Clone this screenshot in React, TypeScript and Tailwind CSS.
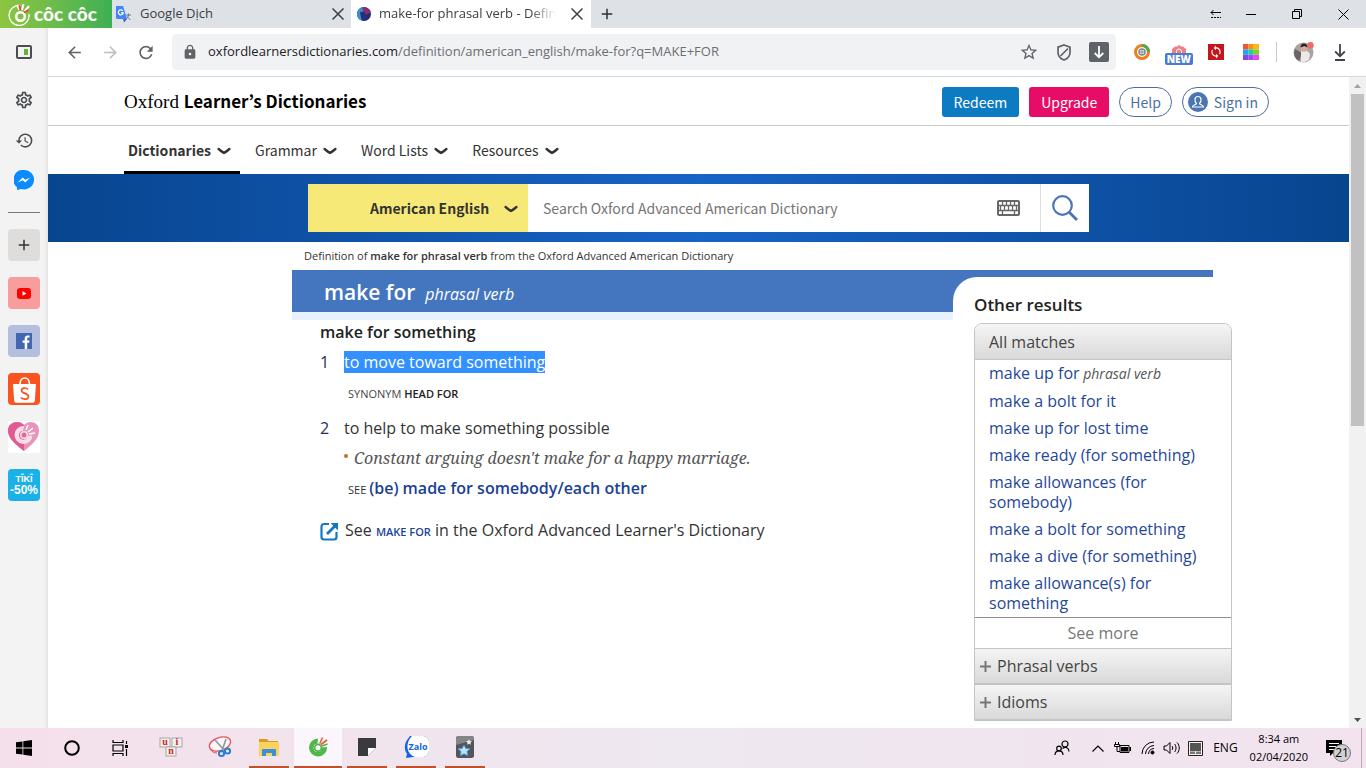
import React from 'react';
import {
  MdAdd,
  MdArrowBack,
  MdArrowForward,
  MdHistory,
  MdLock,
  MdOutlineSettings,
  MdRefresh,
  MdStarBorder,
  MdSync,
} from 'react-icons/md';

const navItems = [
  { label: 'Dictionaries', active: true },
  { label: 'Grammar', active: false },
  { label: 'Word Lists', active: false },
  { label: 'Resources', active: false },
];

const matches = [
  { label: 'make up for', pos: 'phrasal verb' },
  { label: 'make a bolt for it' },
  { label: 'make up for lost time' },
  { label: 'make ready (for something)' },
  { label: 'make allowances (for somebody)' },
  { label: 'make a bolt for something' },
  { label: 'make a dive (for something)' },
  { label: 'make allowance(s) for something' },
];

function Chevron() {
  return (
    <svg width="14" height="9" viewBox="0 0 14 9" fill="none" stroke="currentColor" strokeWidth="2.4" strokeLinecap="round" aria-hidden="true">
      <path d="M1.6 3c1.6 1.200 3.200 2.800 5.400 4C9.200 5.800 10.800 4.200 12.400 3" />
    </svg>
  );
}

function CloseIcon() {
  return (
    <svg width="12" height="12" viewBox="0 0 12 12" stroke="#3c4043" strokeWidth="1.5" aria-hidden="true">
      <path d="M0.500 0.500l11 11M11.500 0.500l-11 11" />
    </svg>
  );
}

function CocCocMark() {
  return (
    <svg width="20" height="20" viewBox="0 0 20 20" fill="none" aria-hidden="true">
      <path d="M10 1.500a9 9 0 1 0 9 8.500l-5 .5a4.200 4.200 0 1 1-4.500-4z" fill="#4eb748" />
      <circle cx="10" cy="10.800" r="3.400" stroke="#4eb748" strokeWidth="1.800" fill="#fff" />
      <path d="M13 7.500l6-4.500" stroke="#e8593b" strokeWidth="1.800" />
      <path d="M11.800 6.500L14.500 0.500" stroke="#e8593b" strokeWidth="1.500" />
      <path d="M14 9l5.500-2" stroke="#4eb748" strokeWidth="1.500" />
    </svg>
  );
}

function TabStrip() {
  return (
    <header className="flex h-7 shrink-0 bg-[#dee1e6] text-[#3c4043]">
      <div className="flex w-28 items-center bg-linear-to-r from-[#8dc63f] to-[#3cb054] pl-2 text-white">
        <svg width="22" height="24" viewBox="0 0 22 24" fill="none" aria-hidden="true">
          <path d="M13 3.600A10 10 0 1 0 21 12" stroke="#fff" strokeWidth="1.400" />
          <circle cx="12.500" cy="14.500" r="4.300" stroke="#fff" strokeWidth="2.600" />
          <path d="M11.500 8l-2.500-5M14 8l1.500-6M16.500 9.500L21 4" stroke="#fff" strokeWidth="2" />
          <path d="M12.300 8l-1-5M16 10.500l4.500-2.500" stroke="#e8452f" strokeWidth="1.800" />
        </svg>
        <span className="ml-1 font-['Lato'] text-[19px] leading-7 font-black">côc côc</span>
      </div>
      <div className="flex w-[239px] items-center pr-[7px] pl-1">
        <svg width="16" height="17" viewBox="0 0 16 17" aria-hidden="true">
          <path d="M7 4h8v11H9z" fill="#dfe3ea" />
          <path d="M10 9h5M12.500 7.500V9c0 2-1.500 3.500-3 4.500M11 10.500c1 1.500 2 2.500 3.500 3" stroke="#6b7684" fill="none" />
          <path d="M0 0h7l4 13H1.500A1.500 1.500 0 0 1 0 11.500z" fill="#4285f4" />
          <path d="M7 13h4l-3 3.500z" fill="#3367d6" />
          <path d="M6.800 4.800a2.500 2.500 0 1 0 .5 2H5" stroke="#fff" strokeWidth="1.200" fill="none" />
        </svg>
        <span className="ml-2 grow text-[13px]">Google Dịch</span>
        <button type="button" aria-label="Close Google Dịch tab"><CloseIcon /></button>
      </div>
      <div className="flex w-60 items-center bg-white pr-2 pl-1.5">
        <svg width="14" height="14" viewBox="0 0 14 14" aria-hidden="true">
          <circle cx="7" cy="7" r="7" fill="#1d2f6f" />
          <path d="M0 7a7 7 0 0 1 6-6.900L9 3 3 6l2 7.700A7 7 0 0 1 0 7z" fill="#3e8fd0" />
          <path d="M5 1.500C9-1 13 2 13.800 5L9 8z" fill="#8c2b6e" />
          <path d="M3 4l8 7-4 2.500z" fill="#2a2f86" />
        </svg>
        <span className="ml-2 mask-r-from-85% text-[13px] whitespace-nowrap">make-for phrasal verb - Defin</span>
        <button type="button" className="ml-auto" aria-label="Close make-for tab"><CloseIcon /></button>
      </div>
      <button type="button" className="flex w-8 items-center justify-center text-[#2d3033]" aria-label="New tab">
        <MdAdd size={18} />
      </button>
      <div className="ml-auto flex items-center gap-6 pr-[17px] text-black">
        <button type="button" aria-label="Tab list">
          <svg width="12" height="8" viewBox="0 0 12 8" fill="none" stroke="currentColor" aria-hidden="true">
            <path d="M1 2.500h10M3.500 0L1 2.500 3.500 5" />
            <path d="M1 7.500h10" strokeDasharray="2 1" />
          </svg>
        </button>
        <button type="button" aria-label="Minimize" className="mr-3">
          <svg width="10" height="10" viewBox="0 0 10 10" stroke="currentColor" aria-hidden="true"><path d="M0 5.500h10" /></svg>
        </button>
        <button type="button" aria-label="Restore" className="mr-3">
          <svg width="10" height="10" viewBox="0 0 10 10" fill="none" stroke="currentColor" aria-hidden="true">
            <path d="M0.500 2.500h7v7h-7zM2.500 2.500v-2h7v7h-2" />
          </svg>
        </button>
        <button type="button" aria-label="Close window">
          <svg width="11" height="11" viewBox="0 0 11 11" stroke="currentColor" aria-hidden="true"><path d="M0.500 0.500l10 10M10.500 0.500l-10 10" /></svg>
        </button>
      </div>
    </header>
  );
}

function Sidebar() {
  return (
    <aside className="flex w-12 shrink-0 flex-col items-center bg-[#f3f3f3] text-[#4a4c50] shadow-[inset_-4px_0_4px_-3px_#dcdcdc]">
      <button type="button" aria-label="Side panel" className="mb-1 flex h-12 items-center">
        <svg width="16" height="14" viewBox="0 0 16 14" fill="none" aria-hidden="true">
          <rect x="1" y="1" width="14" height="12" rx="1" stroke="#4a4c50" strokeWidth="2" />
          <rect x="8" y="4" width="4" height="6" fill="#5fb336" />
        </svg>
      </button>
      <button type="button" aria-label="Settings" className="flex h-10 items-center"><MdOutlineSettings size={20} /></button>
      <button type="button" aria-label="History" className="flex h-10 items-center"><MdHistory size={19} /></button>
      <button type="button" aria-label="Messenger" className="flex h-10 items-center">
        <svg width="20" height="20" viewBox="0 0 20 20" aria-hidden="true">
          <path d="M10 0a10 9.700 0 1 1-2.800 19L3 20v-2.800A9.700 9.700 0 0 1 10 0z" fill="#0a8cff" />
          <path d="M3.800 12.500l4.800-5 2.700 2.300 4.900-2.300-4.800 5-2.700-2.300z" fill="#fff" />
        </svg>
      </button>
      <div className="mt-3 h-px w-8 bg-[#777]" />
      <div className="mt-4 flex flex-col gap-4">
        <button type="button" aria-label="Add shortcut" className="flex size-8 items-center justify-center rounded-sm bg-[#dedddb] text-[#333]"><MdAdd size={18} /></button>
        <button type="button" aria-label="YouTube" className="flex size-8 items-center justify-center rounded-sm bg-[#f79d9b]">
          <svg width="14" height="11" viewBox="0 0 14 11" aria-hidden="true"><rect width="14" height="11" rx="3" fill="#f00" /><path d="M5.500 3.200l4 2.300-4 2.300z" fill="#fff" /></svg>
        </button>
        <button type="button" aria-label="Facebook" className="flex size-8 items-center justify-center rounded-sm bg-[#b3bfdc]">
          <svg width="16" height="16" viewBox="0 0 16 16" aria-hidden="true"><path d="M0 0h16v16H0z" fill="#4267b2" /><path d="M8.700 16V9.800H6.600V7.400h2.100V5.600c0-2.100 1.300-3.200 3.100-3.200.9 0 1.600.1 1.800.1v2.100h-1.200c-1 0-1.200.5-1.200 1.100v1.700h2.300l-.3 2.400h-2V16z" fill="#fff" /></svg>
        </button>
        <button type="button" aria-label="Shopee" className="size-8 overflow-hidden rounded-sm bg-[#f9541f]">
          <svg width="32" height="32" viewBox="0 0 32 32" fill="none" aria-hidden="true">
            <path d="M5 11h23l-1.200 17a2 2 0 0 1-2 1.800H8.200a2 2 0 0 1-2-1.800z" fill="#fff" />
            <path d="M12 11c0-8 9.500-8 9.500 0" stroke="#fff" strokeWidth="1.700" />
            <path d="M20 16.300c-2-2-6.500-1.700-6.500 1.200 0 3.300 7 2.500 7 6 0 3.200-5 3.500-7.700 1.200" stroke="#f9541f" strokeWidth="1.700" />
          </svg>
        </button>
        <button type="button" aria-label="Coc Coc charity" className="size-8 bg-white">
          <svg width="32" height="32" viewBox="0 0 32 32" fill="none" aria-hidden="true">
            <path d="M16 30C6 22 0 17 0 9.500 0 1 11-1.500 16 4c5-5.500 15-3 15 5.500C31 17 26 22 16 30z" fill="#e994b9" />
            <path d="M16 30C6 22 0 17 0 9.500 0 1 11-1.500 16 4z" fill="#e0598f" />
            <path d="M16 5a9 9 0 1 0 8.500 9.500l-4.500.2a4.500 4.500 0 1 1-4.500-5z" fill="#fbdde8" />
            <circle cx="16" cy="14" r="3.300" stroke="#fbdde8" strokeWidth="1.600" fill="#dd6b9a" />
            <path d="M18 9l2-5M20 11l5-4M21 13l6-1" stroke="#fff" strokeWidth="1.500" />
          </svg>
        </button>
        <button type="button" className="flex size-8 flex-col items-center justify-center overflow-hidden rounded-sm bg-[#1ab0e8] font-['Liberation_Sans'] font-bold text-white">
          <span className="text-[9px] leading-[10px]">TÎKÎ</span>
          <span className="text-[12px] leading-3">-50%</span>
        </button>
      </div>
    </aside>
  );
}

function Toolbar() {
  return (
    <div className="flex h-[49px] shrink-0 items-center border-b border-[#d5d8dc] bg-white pr-5 pl-4 text-[#5f6368]">
      <button type="button" aria-label="Back" className="flex w-5 justify-center"><MdArrowBack size={19} /></button>
      <button type="button" aria-label="Forward" className="ml-4 flex w-5 justify-center text-[#bbbdc0]"><MdArrowForward size={19} /></button>
      <button type="button" aria-label="Reload" className="ml-4 flex w-5 justify-center"><MdRefresh size={21} /></button>
      <div className="ml-4 flex h-9 grow items-center rounded-sm bg-[#f1f2f4] pr-[7px] pl-2.5">
        <MdLock size={16} />
        <a href="#address" className="ml-2.5 text-[13px] text-[#6b6e72]">
          <span className="text-[#202124]">oxfordlearnersdictionaries.com</span>/definition/american_english/make-for?q=MAKE+FOR
        </a>
        <div className="ml-auto flex items-center gap-[17px]">
          <button type="button" aria-label="Bookmark"><MdStarBorder size={20} /></button>
          <button type="button" aria-label="Ad blocker">
            <svg width="16" height="17" viewBox="0 0 16 17" fill="none" stroke="#5f6368" strokeWidth="1.700" aria-hidden="true">
              <path d="M8 1l6 2.200v5c0 4-2.500 6.500-6 7.800-3.500-1.300-6-3.800-6-7.800v-5zM4.500 12L12 4.500" />
            </svg>
          </button>
          <button type="button" aria-label="Save media" className="flex size-5 items-center justify-center rounded-[2px] bg-[#5f6368]">
            <svg width="10" height="13" viewBox="0 0 10 13" fill="none" stroke="#fff" strokeWidth="1.800" aria-hidden="true"><path d="M5 0v11M0.700 7L5 11.300 9.300 7" /></svg>
          </button>
        </div>
      </div>
      <div className="ml-[18px] flex items-center gap-[19px]">
        <button type="button" aria-label="Safe browsing extension">
          <svg width="16" height="16" viewBox="0 0 16 16" fill="none" aria-hidden="true">
            <circle cx="8" cy="8" r="6.500" stroke="#ef7d22" strokeWidth="3" />
            <path d="M8 1.500A6.500 6.500 0 0 1 14.500 8" stroke="#54a84c" strokeWidth="3" />
            <circle cx="8" cy="8" r="3" stroke="#7d8890" strokeWidth="1.500" />
            <path d="M8 5v6M5 8h6" stroke="#7d8890" />
          </svg>
        </button>
        <button type="button" className="-mx-1 flex flex-col items-center pt-1.5">
          <svg width="14" height="8" viewBox="0 0 14 8" fill="none" aria-hidden="true">
            <path d="M7 0l2 1.500h2L14 4v4H0V4l3-2.500h2z" fill="#ee7f83" />
            <path d="M4.500 8V6.500a2.500 2.500 0 0 1 5 0V8" stroke="#fff" />
          </svg>
          <span className="rounded-[2px] bg-[#4a7ad8] px-0.5 font-['Open_Sans'] text-[10px] leading-3 font-extrabold text-white">NEW</span>
        </button>
        <button type="button" aria-label="Sync extension" className="flex size-4 items-center justify-center bg-[#c4161c] text-white"><MdSync size={14} /></button>
        <button type="button" aria-label="Color extension">
          <svg width="16" height="16" viewBox="0 0 16 16" aria-hidden="true">
            <path d="M0 0h5.400v5.400H0z" fill="#f4552d" /><path d="M5.400 0h5.300v5.400H5.400z" fill="#fd8d12" /><path d="M10.700 0H16v5.400h-5.300z" fill="#fdb813" />
            <path d="M0 5.400h5.400v5.300H0z" fill="#1fa5f2" /><path d="M5.400 5.400h5.300v5.300H5.400z" fill="#19cfa0" /><path d="M10.700 5.400H16v5.300h-5.300z" fill="#7ed321" />
            <path d="M0 10.700h5.400V16H0z" fill="#7c4be0" /><path d="M5.400 10.700h5.300V16H5.400z" fill="#a347ea" /><path d="M10.700 10.700H16V16h-5.300z" fill="#e94be8" />
          </svg>
        </button>
        <div className="ml-[-2px] h-5 w-px bg-[#c8c8c8]" />
      </div>
      <button type="button" aria-label="Profile" className="ml-4">
        <svg width="21" height="21" viewBox="0 0 21 21" aria-hidden="true">
          <circle cx="10.500" cy="10.500" r="10" fill="#a9a3a3" />
          <path d="M2 7l7 4-3 8a10 10 0 0 1-5-8z" fill="#6c6464" />
          <path d="M8 9.500c3-2 8-1 9 3l-1 5a9.500 9.500 0 0 1-8 2.500z" fill="#ece9e8" />
          <circle cx="11" cy="6.500" r="3.300" fill="#d8ab95" />
          <path d="M7.500 5.500C7.500 0 14.500 0 14.500 5.500l-3-1.500z" fill="#27201f" />
          <circle cx="17.500" cy="3.200" r="3.200" fill="#f0696c" />
        </svg>
      </button>
      <button type="button" aria-label="Downloads" className="ml-5">
        <svg width="12" height="17" viewBox="0 0 12 17" fill="none" stroke="#3f4246" strokeWidth="1.800" aria-hidden="true"><path d="M6 0v12M1.200 7.500L6 12.300l4.800-4.800M1 16h10" /></svg>
      </button>
    </div>
  );
}

function SiteHeader() {
  return (
    <>
      <div className="border-b border-[#cdcdcd] bg-white">
        <div className="mx-auto flex h-12 max-w-[1149px] items-center pt-px pr-1">
          <a href="#home" className="text-[17px] leading-6 text-black">
            <span className="font-['Liberation_Serif'] text-[19px]">Oxford </span>
            <span className="font-['Noto_Sans_CJK_JP'] font-bold">Learner’s Dictionaries</span>
          </a>
          <div className="ml-auto flex items-center gap-2.5 font-['Noto_Sans_CJK_JP'] text-sm text-[#4a6fa5]">
            <button type="button" className="h-[30px] rounded-[3px] bg-[#0d7bc1] px-3 text-white">Redeem</button>
            <button type="button" className="h-[30px] rounded-[3px] bg-[#e70d67] px-3 text-white">Upgrade</button>
            <button type="button" className="h-[30px] rounded-full border border-[#4a6fa5] px-2.5">Help</button>
            <button type="button" className="flex h-[30px] items-center gap-1.5 rounded-full border border-[#4a6fa5] pr-2.5 pl-[5px]">
              <svg width="20" height="20" viewBox="0 0 20 20" aria-hidden="true">
                <circle cx="10" cy="10" r="10" fill="#4a75b0" />
                <path d="M8.500 11.500C6 9 6.500 4.500 10 4.500s4 4.500 1.500 7c0 1.500 4 1 4 3.500h-11c0-2.500 4-2 4-3.500z" fill="none" stroke="#fff" strokeWidth="1.200" />
              </svg>
              Sign in
            </button>
          </div>
        </div>
      </div>
      <nav className="bg-white">
        <div className="mx-auto flex h-12 max-w-[1149px] gap-[11px] font-['Noto_Sans_CJK_JP'] text-sm text-[#333]">
          {navItems.map((item) => (
            <a
              key={item.label}
              href="#nav"
              className={
                item.active
                  ? 'flex items-center gap-1.5 border-b-[3px] border-black pt-[3px] pr-[9px] pl-1 font-bold'
                  : 'flex items-center gap-1.5 border-b-[3px] border-transparent pt-[3px] pr-[9px] pl-1'
              }
            >
              {item.label}
              <Chevron />
            </a>
          ))}
        </div>
      </nav>
    </>
  );
}

function SearchBanner() {
  return (
    <div className="bg-linear-to-r from-[#08458f] via-[#1763c6] to-[#08458f] py-2.5">
      <form className="mx-auto flex h-12 max-w-[781px] bg-white font-['Noto_Sans_CJK_JP'] text-sm" onSubmit={(e) => e.preventDefault()}>
        <div className="flex w-[220px] items-center justify-end gap-3.5 bg-[#f7e977] pr-2.5 text-[#333]">
          <select aria-label="Dictionary" className="appearance-none bg-transparent font-bold">
            <option>American English</option>
          </select>
          <Chevron />
        </div>
        <input
          type="text"
          aria-label="Search"
          placeholder="Search Oxford Advanced American Dictionary"
          className="min-w-0 grow px-[15px] text-[#333] outline-none placeholder:text-[#757575]"
        />
        <button type="button" aria-label="Virtual keyboard" className="px-5">
          <svg width="23" height="16" viewBox="0 0 23 16" fill="none" stroke="#666" aria-hidden="true">
            <rect x="1" y="1" width="21" height="14" rx="1" strokeWidth="2" />
            <path d="M2 5.500h19M2 10.500h19M5.500 1v5M9.500 1v5M13.500 1v5M17.500 1v5M3.500 5.500v5M7.500 5.500v5M11.500 5.500v5M15.500 5.500v5M19.500 5.500v5M5.500 10v4M17.500 10v4" strokeWidth="1.300" />
          </svg>
        </button>
        <button type="submit" aria-label="Submit search" className="flex w-[49px] items-center justify-center border-l border-[#ddd]">
          <svg width="26" height="26" viewBox="0 0 26 26" fill="none" stroke="#4a75b5" strokeWidth="2.200" aria-hidden="true">
            <circle cx="10.500" cy="10.500" r="9.300" />
            <path d="M17 17l8 8" strokeWidth="2.800" />
          </svg>
        </button>
      </form>
    </div>
  );
}

function Entry() {
  return (
    <main className="min-w-0 grow border-t-8 border-[#e8f2fd] pl-7 text-base text-[#333]">
      <h2 className="leading-6 font-semibold text-[#222]">make for something</h2>
      <ol>
        <li className="mt-1.5 flex leading-6">
          <span className="w-6 text-[#1f2d5a]">1</span>
          <div>
            <span className="bg-[#3390ff] text-white">to move toward something</span>
            <p className="mt-2 pl-1 text-[11px] leading-6 text-[#444]">
              SYNONYM <span className="font-semibold text-[#222]">HEAD FOR</span>
            </p>
          </div>
        </li>
        <li className="mt-2.5 flex leading-6">
          <span className="w-6 text-[#1f2d5a]">2</span>
          <div>
            <span>to help to make something possible</span>
            <ul className="mt-1.5">
              <li className="flex items-center gap-1.5">
                <span className="mb-1 size-1 rounded-full bg-[#b9742f]" />
                <span className="font-['Noto_Serif','Liberation_Serif',serif] text-[#555] italic">Constant arguing doesn't make for a happy marriage.</span>
              </li>
            </ul>
            <p className="mt-1.5 pl-1">
              <span className="text-[11px]">SEE </span>
              <a href="#made-for" className="font-semibold text-[#1b3f94]">(be) made for somebody/each other</a>
            </p>
          </div>
        </li>
      </ol>
      <p className="mt-4 flex items-center gap-1.5 leading-6">
        <svg width="19" height="19" viewBox="0 0 19 19" fill="none" stroke="#1278c4" strokeWidth="2.200" aria-hidden="true">
          <path d="M9 2H4a2.500 2.500 0 0 0-2.500 2.500V15A2.500 2.500 0 0 0 4 17.500h10a2.500 2.500 0 0 0 2.500-2.500v-5" />
          <path d="M7 12L16 3" strokeWidth="2.800" />
          <path d="M10.500 1H18v7.500z" fill="#1278c4" stroke="none" />
        </svg>
        <span>
          See <a href="#british" className="text-[11px] font-semibold text-[#1b4594]">MAKE FOR</a> in the Oxford Advanced Learner's Dictionary
        </span>
      </p>
    </main>
  );
}

function Results() {
  return (
    <aside className="relative -mt-[35px] w-[279px] shrink-0 rounded-tl-3xl bg-white pt-4 pl-[21px] text-base text-[#444]">
      <h3 className="text-[17px] leading-6 font-semibold text-[#222]">Other results</h3>
      <div className="mt-1.5 overflow-hidden rounded-t-lg border border-[#c4c4c4]">
        <button type="button" className="block h-9 w-full border-b border-[#c4c4c4] bg-linear-to-b from-[#f5f5f5] to-[#d9d9d9] px-3.5 text-left">All matches</button>
        <ul className="pt-[3px] leading-5">
          {matches.map((m) => (
            <li key={m.label} className="mb-[7px] pr-6 pl-3.5 last:mb-1">
              <a href="#match" className="text-[#1f479a]">{m.label}</a>
              {m.pos && <span className="text-sm text-[#555] italic"> {m.pos}</span>}
            </li>
          ))}
        </ul>
        <button type="button" className="block h-[31px] w-full border-t border-[#8f8f8f] text-center text-[#777]">See more</button>
        {['Phrasal verbs', 'Idioms'].map((label) => (
          <button key={label} type="button" className="flex h-9 w-full items-center gap-1.5 border-t border-b border-t-[#c4c4c4] border-b-[#c4c4c4] bg-linear-to-b from-[#f5f5f5] to-[#d9d9d9] pl-[5px]">
            <svg width="11" height="11" viewBox="0 0 11 11" stroke="#777" strokeWidth="2" aria-hidden="true"><path d="M5.500 0v11M0 5.500h11" /></svg>
            {label}
          </button>
        ))}
      </div>
    </aside>
  );
}

function Scrollbar() {
  return (
    <div className="flex w-[17px] shrink-0 flex-col items-center bg-[#f1f1f1]" aria-hidden="true">
      <svg width="17" height="17" viewBox="0 0 17 17"><path d="M8.500 7L12 11H5z" fill="#a3a3a3" /></svg>
      <div className="h-[51%] w-[13px] bg-[#c1c1c1]" />
      <svg className="mt-auto" width="17" height="17" viewBox="0 0 17 17"><path d="M8.500 11L12 7H5z" fill="#505050" /></svg>
    </div>
  );
}

function TaskApp({ label, state, children }: { label: string; state: 'idle' | 'open' | 'active'; children: React.ReactNode }) {
  return (
    <button type="button" aria-label={label} className={state === 'active' ? 'flex h-10 w-12 flex-col items-center bg-[#fbf6fb]' : 'flex h-10 w-12 flex-col items-center'}>
      <span className="flex grow items-center justify-center">{children}</span>
      {state === 'idle' && <span className="h-0.5" />}
      {state === 'open' && <span className="h-0.5 w-10 bg-[#c0522b]" />}
      {state === 'active' && <span className="h-0.5 w-full bg-[#c0522b]" />}
    </button>
  );
}

function Taskbar() {
  return (
    <footer className="flex h-10 shrink-0 bg-linear-to-r from-[#f4e0ea] via-[#eee8f0] to-[#f2e3ee] text-black">
      <button type="button" aria-label="Start" className="flex w-12 items-center justify-center">
        <svg width="16" height="16" viewBox="0 0 16 16" aria-hidden="true"><path d="M0 2.300l6.500-.9v6.200H0zM7.300 1.300L16 0v7.600H7.300zM0 8.400h6.500v6.200L0 13.700zM7.300 8.400H16V16l-8.700-1.300z" /></svg>
      </button>
      <button type="button" aria-label="Search" className="flex w-12 items-center justify-center">
        <svg width="16" height="16" viewBox="0 0 16 16" fill="none" stroke="#000" strokeWidth="2" aria-hidden="true"><circle cx="8" cy="8" r="6.800" /></svg>
      </button>
      <button type="button" aria-label="Task view" className="flex w-12 items-center justify-center">
        <svg width="17" height="16" viewBox="0 0 17 16" fill="none" stroke="#000" strokeWidth="1.200" aria-hidden="true">
          <path d="M1 0v2.500h10V0M1 5h10v6H1zM1 16v-2.500h10V16M14.500 1v3M14.500 9v7" /><path d="M13 5h3v3h-3z" fill="#000" stroke="none" />
        </svg>
      </button>
      <div className="ml-[3px] flex gap-px">
        <TaskApp label="UniKey" state="idle">
          <svg width="24" height="20" viewBox="0 0 24 20" aria-hidden="true">
            <g fill="#f3f0f0" stroke="#aaa6a6"><rect x="1" y="1" width="10" height="9" /><rect x="13" y="1" width="10" height="9" /><rect x="7" y="10" width="10" height="9" /></g>
            <g fontFamily="Liberation Serif" fontSize="10" fontWeight="bold" fill="#d02424" textAnchor="middle"><text x="6" y="8">u</text><text x="18" y="8">i</text><text x="12" y="17">n</text></g>
          </svg>
        </TaskApp>
        <TaskApp label="Snipping Tool" state="idle">
          <svg width="26" height="24" viewBox="0 0 26 24" fill="none" aria-hidden="true">
            <ellipse cx="13" cy="9" rx="11" ry="6.500" transform="rotate(-18 13 9)" stroke="#e0555b" strokeWidth="1.300" fill="#fbf5f8" />
            <path d="M8 5l10 11M19 4l-4 12" stroke="#8e98a5" strokeWidth="1.600" />
            <circle cx="14.500" cy="18.500" r="2.600" stroke="#2c7ed0" strokeWidth="2" /><circle cx="20.500" cy="16" r="2.600" stroke="#2c7ed0" strokeWidth="2" />
            <path d="M3 14c2 3 4 4 7 4" stroke="#e0555b" />
          </svg>
        </TaskApp>
        <TaskApp label="File Explorer" state="open">
          <svg width="22" height="19" viewBox="0 0 22 19" aria-hidden="true">
            <path d="M1 1h8l1.500 2H20v6H1z" fill="#dc9b1d" /><path d="M1 4h20v14H1z" fill="#fad25f" /><path d="M4 18v-6a1 1 0 0 1 1-1h12a1 1 0 0 1 1 1v6h-4v-3H8v3z" fill="#3b8fd6" />
          </svg>
        </TaskApp>
        <TaskApp label="Coc Coc" state="active"><CocCocMark /></TaskApp>
        <TaskApp label="Sticky Notes" state="open">
          <svg width="18" height="18" viewBox="0 0 18 18" aria-hidden="true"><path d="M0 0h18v10l-8 8H0z" fill="#3a393c" /><path d="M10 18v-8h8z" fill="#fff" /></svg>
        </TaskApp>
        <TaskApp label="Zalo" state="open">
          <svg width="25" height="24" viewBox="0 0 25 24" aria-hidden="true">
            <path d="M6 1h13a6 6 0 0 1 6 6v9a6 6 0 0 1-6 6H9l-7 1 1-4a12 12 0 0 1 0-14z" fill="#1464e0" />
            <path d="M8 1h11a6 6 0 0 1 6 6v9a6 6 0 0 1-6 6h-8C2 19 1 8 8 1z" fill="#fff" />
            <text x="14" y="14.500" fontFamily="Open Sans" fontSize="9" fontWeight="bold" fill="#1464e0" textAnchor="middle">Zalo</text>
          </svg>
        </TaskApp>
        <TaskApp label="Anki" state="open">
          <svg width="18" height="22" viewBox="0 0 18 22" aria-hidden="true">
            <rect width="18" height="22" rx="2.500" fill="#555558" /><path d="M0 9l18-5V3a3 3 0 0 0-3-3H3a3 3 0 0 0-3 3z" fill="#858588" />
            <path d="M8 9l1.800 3.500 4 .3-2.800 2.800.8 4L8 17.800l-3.700 1.800.8-4-3-2.800 4-.3z" fill="#bfe0fa" stroke="#4b9fe0" />
            <path d="M13 3l.9 2 2.100.2-1.500 1.500.4 2.100L13 7.700l-1.900 1.100.4-2.100L10 5.200l2.100-.2z" fill="#dfeefa" />
          </svg>
        </TaskApp>
      </div>
      <div className="ml-auto flex items-center text-[12px] leading-[18px]">
        <svg width="16" height="16" viewBox="0 0 16 16" fill="none" stroke="#000" strokeWidth="1.200" aria-hidden="true">
          <circle cx="11" cy="4" r="3" /><circle cx="5" cy="8.500" r="2.300" /><path d="M1 15c0-5.500 8-5.500 8 0M8.500 8.500c3-2.500 6.500-.5 6.500 3" />
        </svg>
        <svg className="ml-[22px]" width="12" height="7" viewBox="0 0 12 7" fill="none" stroke="#000" strokeWidth="1.200" aria-hidden="true"><path d="M0.500 6.500L6 1l5.500 5.500" /></svg>
        <svg className="ml-2.5" width="17" height="12" viewBox="0 0 17 12" fill="none" stroke="#000" aria-hidden="true"><path d="M6 3.500h9v7H6z" /><path d="M7 5h7v4.500H7zM15.500 5H17v4h-1.500z" fill="#000" stroke="none" /><path d="M1.500 0v2M4.500 0v2M0.500 2.500h5v2h-5zM3 4.500v5h3" /></svg>
        <svg className="ml-2.5" width="14" height="14" viewBox="0 0 14 14" fill="none" stroke="#000" aria-hidden="true"><path d="M1 13A12 12 0 0 1 13 1M4.500 13A9 9 0 0 1 13 4.500M7.500 13A6 6 0 0 1 13 7.500" /><circle cx="11.500" cy="11.500" r="1.500" fill="#000" /></svg>
        <svg className="ml-2" width="17" height="14" viewBox="0 0 17 14" fill="none" stroke="#000" aria-hidden="true"><path d="M1 5h2.500L7 1.500v11L3.500 9H1zM9 5c1 1 1 3 0 4M11.500 3c2 2 2 6 0 8M14 1.500c3 3 3 8 0 11" /></svg>
        <svg className="ml-2" width="15" height="15" viewBox="0 0 15 15" aria-hidden="true"><path d="M0.500 0.500h14v14H.5z" fill="#f4f4f4" stroke="#222" /><path d="M2 2h11v8H2z" fill="#555" /><path d="M2 10.500h5v2.500H2zM8 10.500h5v2.500H8z" fill="#777" /></svg>
        <span className="ml-2.5">ENG</span>
        <div className="ml-3 text-center text-[11px] leading-[18px]">
          <div>8:34 am</div>
          <div>02/04/2020</div>
        </div>
        <button type="button" className="relative ml-[17px] flex w-9 items-center" aria-label="21 notifications">
          <svg width="18" height="17" viewBox="0 0 18 17" aria-hidden="true"><path d="M1 0h16v13H8l-3 3v-3H1z" /><path d="M4 3.500h10M4 6.500h10M4 9.500h7" stroke="#fff" /></svg>
          <span className="absolute top-1 left-2 flex size-[18px] items-center justify-center rounded-full border border-[#777] bg-[#d3d0d4]">21</span>
        </button>
        <div className="h-10 border-l border-[#b9aab5] pr-1" />
      </div>
    </footer>
  );
}

export default function App() {
  return (
    <div className="flex h-screen flex-col overflow-hidden bg-white font-['Open_Sans','Noto_Sans',sans-serif]">
      <TabStrip />
      <div className="flex min-h-0 grow">
        <Sidebar />
        <div className="flex min-w-0 grow flex-col">
          <Toolbar />
          <div className="flex min-h-0 grow">
            <div className="min-w-0 grow overflow-hidden">
              <SiteHeader />
              <SearchBanner />
              <div className="mx-auto max-w-[1149px] pr-[41px] pl-[168px]">
                <p className="h-7 pl-3 text-[11px] leading-7 text-[#333]">
                  Definition of <strong className="font-semibold">make for phrasal verb</strong> from the Oxford Advanced American Dictionary
                </p>
                <h1 className="mr-[19px] flex h-[42px] items-baseline gap-2.5 bg-[#4476bf] pl-8 text-[21px] leading-[44px] font-semibold text-white">
                  make for <span className="text-base font-normal italic">phrasal verb</span>
                </h1>
                <div className="flex">
                  <Entry />
                  <Results />
                </div>
              </div>
            </div>
            <Scrollbar />
          </div>
        </div>
      </div>
      <Taskbar />
    </div>
  );
}
